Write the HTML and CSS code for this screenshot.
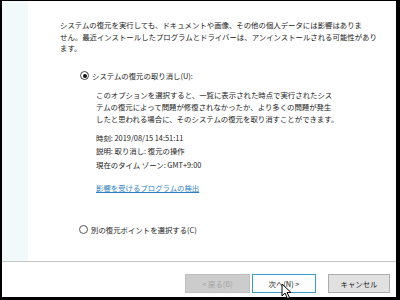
FILE: index.html
```html
<!DOCTYPE html>
<html lang="ja">
<head>
<meta charset="utf-8">
<link rel="stylesheet" href="styles.css">
</head>
<body>
<div class="frame">
  <div class="main">
    <div class="side"></div>
    <div class="content">
      <p class="intro">システムの復元を実行しても、ドキュメントや画像、その他の個人データには影響はありま<br>せん。最近インストールしたプログラムとドライバーは、アンインストールされる可能性があり<br>ます。</p>
      <div class="option">
        <span class="radio checked"></span><span class="label">システムの復元の取り消し(U):</span>
      </div>
      <div class="detail">
        <p class="desc">このオプションを選択すると、一覧に表示された時点で実行されたシス<br>テムの復元によって問題が修復されなかったか、より多くの問題が発生<br>したと思われる場合に、そのシステムの復元を取り消すことができます。</p>
        <p class="info">時刻: 2019/08/15 14:51:11</p>
        <p class="info">説明: 取り消し: 復元の操作</p>
        <p class="info">現在のタイム ゾーン: GMT+9:00</p>
        <a class="link">影響を受けるプログラムの検出</a>
      </div>
      <div class="option second">
        <span class="radio"></span><span class="label">別の復元ポイントを選択する(C)</span>
      </div>
    </div>
  </div>
  <div class="sep"></div>
  <div class="footer">
    <span class="btn disabled">&lt; 戻る(B)</span>
    <span class="btn primary">次へ(N) &gt;
      <svg class="cursor" width="12" height="17" viewBox="0 0 12 17"><path d="M1 1 L1 13 L4 10 L6.5 15.5 L8.5 14.5 L6 9.5 L10 9.5 Z" fill="#fff" stroke="#000" stroke-width="1" stroke-linejoin="round"/></svg>
    </span>
    <span class="btn cancel">キャンセル</span>
  </div>
</div>
</body>
</html>
```

FILE: styles.css
```css
* { box-sizing: border-box; }
html, body { margin: 0; padding: 0; background: #000; }
body {
  font-family: "Noto Sans CJK JP", "Noto Sans", sans-serif;
  font-size: 7.4px;
  color: #1a1a1a;
}
p { margin: 0; }
.frame {
  width: 400px;
  height: 300px;
  border-style: solid;
  border-color: #000;
  border-width: 1px 4px 3px 2px;
  background: #fff;
  display: flex;
  flex-direction: column;
}
.main {
  height: 260px;
  display: flex;
}
.side {
  width: 26px;
  background: #f1f9fa;
}
.content {
  flex: 1;
  min-width: 0;
  padding: 18px 0 0 32px;
  background: #fff;
}
.intro { line-height: 11.5px; white-space: nowrap; }
.option {
  display: flex;
  align-items: center;
  height: 12px;
  margin: 16px 0 0 20px;
  white-space: nowrap;
}
.option.second { margin-top: 29px; margin-left: 19px; }
.radio {
  width: 9px;
  height: 9px;
  border: 1px solid #444;
  border-radius: 50%;
  background: #fff;
  margin-right: 3px;
  position: relative;
  flex: none;
}
.radio.checked::after {
  content: "";
  position: absolute;
  left: 1.5px; top: 1.5px;
  width: 4px; height: 4px;
  border-radius: 50%;
  background: #111;
}
.option.second .radio { border-color: #555; }
.detail { margin: 7px 0 0 36px; white-space: nowrap; }
.desc { line-height: 12px; }
.info { line-height: 13.5px; }
.desc + .info { margin-top: 6px; }
.link {
  display: inline-block;
  margin-top: 11px;
  line-height: 12px;
  color: #2f7fc1;
  text-decoration: underline;
}
.sep { height: 1px; background: #c6c6c6; }
.footer {
  flex: 1;
  display: flex;
  justify-content: flex-end;
  align-items: flex-start;
  padding: 12px 6px 0 0;
  background: #fff;
}
.btn {
  height: 19px;
  display: flex;
  align-items: center;
  justify-content: center;
  border: 1px solid #adadad;
  background: #e1e1e1;
  position: relative;
  white-space: nowrap;
}
.btn.disabled {
  width: 65px;
  background: #cccccc;
  border-color: #bfbfbf;
  color: #a3a3a3;
}
.btn.primary {
  width: 64px;
  margin-left: 2px;
  background: #fdfdfd;
  border-color: #3b9bc9;
}
.btn.cancel {
  width: 62px;
  margin-left: 12px;
}
.cursor {
  position: absolute;
  left: 28px;
  top: 8px;
}
```
